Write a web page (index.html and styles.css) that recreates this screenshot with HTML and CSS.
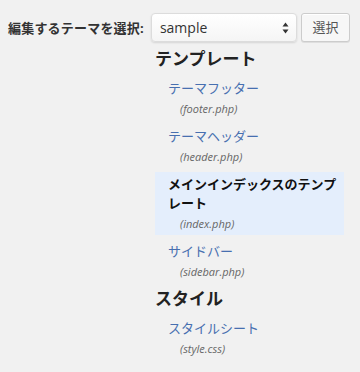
FILE: index.html
```html
<html>
<head>
    <title>テーマ編集</title>
    <link rel="stylesheet" href="styles.css">
</head>
<body>
    <div class="theme-select">
        <label class="select-label">編集するテーマを選択:</label>
        <div class="select-box">
            <span class="select-value">sample</span>
            <svg class="select-arrows" width="7" height="12" viewBox="0 0 7 12">
                <path d="M3.5 0.5 L6.5 4.5 L0.5 4.5 Z" fill="#333"/>
                <path d="M3.5 11.5 L6.5 7.5 L0.5 7.5 Z" fill="#333"/>
            </svg>
        </div>
        <div class="button">選択</div>
    </div>

    <div class="templates">
        <h3>テンプレート</h3>
        <ul>
            <li>
                <a href="#">テーマフッター</a>
                <span class="file">(footer.php)</span>
            </li>
            <li>
                <a href="#">テーマヘッダー</a>
                <span class="file">(header.php)</span>
            </li>
            <li class="highlight">
                <a href="#">メインインデックスのテンプレート</a>
                <span class="file">(index.php)</span>
            </li>
            <li>
                <a href="#">サイドバー</a>
                <span class="file">(sidebar.php)</span>
            </li>
        </ul>
        <h3>スタイル</h3>
        <ul>
            <li>
                <a href="#">スタイルシート</a>
                <span class="file">(style.css)</span>
            </li>
        </ul>
    </div>
</body>
</html>
```

FILE: styles.css
```css
body {
    margin: 0;
    background-color: #f1f1f1;
    font-family: "Open Sans", "Noto Sans CJK JP", sans-serif;
    color: #333;
}

.theme-select {
    display: flex;
    align-items: center;
    padding: 13px 0 0 8px;
}

.select-label {
    font-size: 13px;
    font-weight: bold;
    color: #333;
    letter-spacing: 0.2px;
    margin-right: 7px;
}

.select-box {
    display: flex;
    align-items: center;
    justify-content: space-between;
    box-sizing: border-box;
    width: 146px;
    height: 29px;
    padding: 0 7px 0 8px;
    border: 1px solid #dcdcdc;
    border-radius: 4px;
    background: linear-gradient(#ffffff, #f5f5f5);
    box-shadow: 0 1px 2px rgba(0, 0, 0, 0.12);
    margin-right: 4px;
}

.select-value {
    font-size: 14px;
    color: #333;
}

.button {
    box-sizing: border-box;
    width: 49px;
    height: 29px;
    line-height: 27px;
    text-align: center;
    font-size: 13px;
    color: #555;
    background-color: #f7f7f7;
    border: 1px solid #cccccc;
    border-radius: 3px;
    box-shadow: 0 1px 0 #fff inset, 0 1px 0 rgba(0, 0, 0, 0.08);
}

.templates {
    margin: 5px 0 0 155px;
    width: 189px;
}

h3 {
    margin: 0;
    font-size: 17px;
    line-height: 24px;
    font-weight: bold;
    color: #222;
}

ul {
    list-style: none;
    margin: 5px 0 0 0;
    padding: 0;
}

li {
    padding: 3px 0 2px 13px;
    margin-bottom: 4px;
}

li a {
    display: block;
    font-size: 13px;
    line-height: 19px;
    color: #476fb0;
    text-decoration: none;
}

.file {
    display: block;
    margin-top: 2px;
    padding-left: 12px;
    font-size: 11px;
    line-height: 18px;
    font-style: italic;
    color: #666;
}

.highlight {
    background-color: #e4eefc;
    margin-top: 1px;
}

.highlight a {
    color: #111;
    font-weight: bold;
}
```
